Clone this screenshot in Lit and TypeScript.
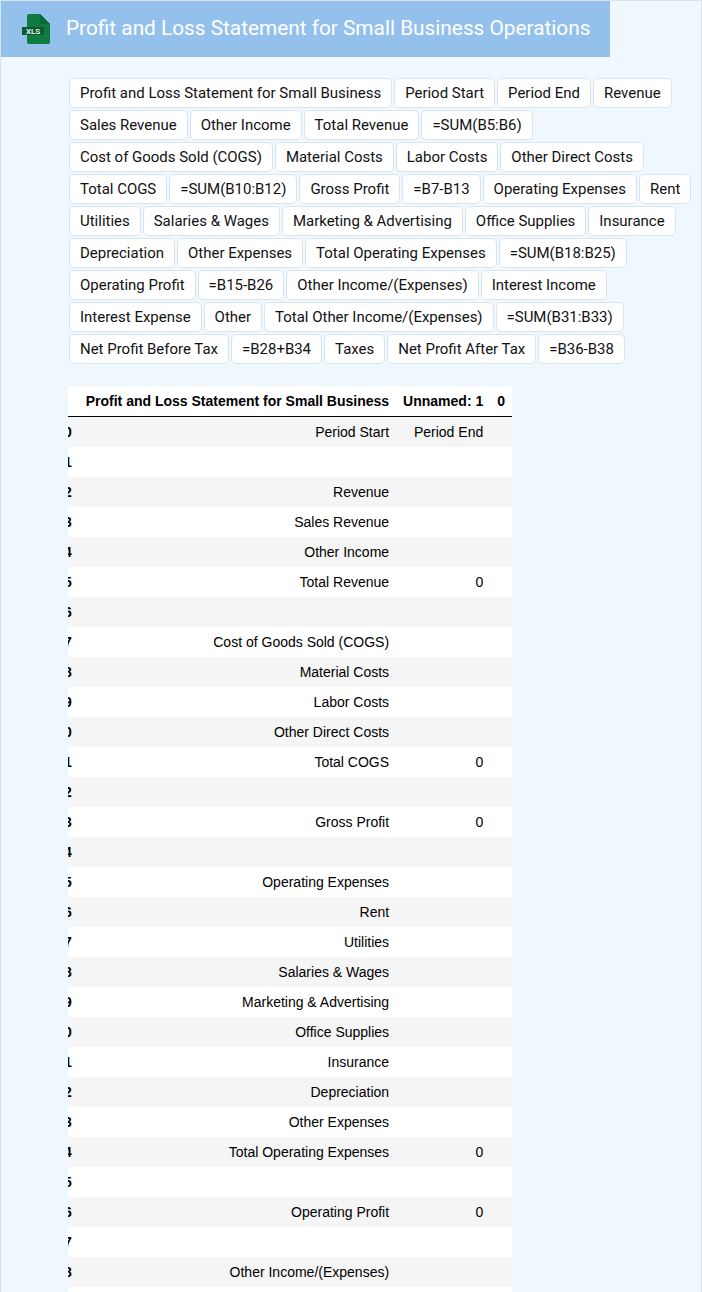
import { LitElement, html, css } from "lit";
import { customElement } from "lit/decorators.js";

const CHIPS = [
  "Profit and Loss Statement for Small Business", "Period Start", "Period End", "Revenue",
  "Sales Revenue", "Other Income", "Total Revenue", "=SUM(B5:B6)",
  "Cost of Goods Sold (COGS)", "Material Costs", "Labor Costs", "Other Direct Costs",
  "Total COGS", "=SUM(B10:B12)", "Gross Profit", "=B7-B13", "Operating Expenses", "Rent",
  "Utilities", "Salaries & Wages", "Marketing & Advertising", "Office Supplies", "Insurance",
  "Depreciation", "Other Expenses", "Total Operating Expenses", "=SUM(B18:B25)",
  "Operating Profit", "=B15-B26", "Other Income/(Expenses)", "Interest Income",
  "Interest Expense", "Other", "Total Other Income/(Expenses)", "=SUM(B31:B33)",
  "Net Profit Before Tax", "=B28+B34", "Taxes", "Net Profit After Tax", "=B36-B38",
];

const ROWS: [string, string][] = [
  ["Period Start", "Period End"], ["", ""], ["Revenue", ""], ["Sales Revenue", ""], ["Other Income", ""],
  ["Total Revenue", "0"], ["", ""], ["Cost of Goods Sold (COGS)", ""], ["Material Costs", ""], ["Labor Costs", ""],
  ["Other Direct Costs", ""], ["Total COGS", "0"], ["", ""], ["Gross Profit", "0"], ["", ""],
  ["Operating Expenses", ""], ["Rent", ""], ["Utilities", ""], ["Salaries & Wages", ""], ["Marketing & Advertising", ""],
  ["Office Supplies", ""], ["Insurance", ""], ["Depreciation", ""], ["Other Expenses", ""], ["Total Operating Expenses", "0"],
  ["", ""], ["Operating Profit", "0"], ["", ""], ["Other Income/(Expenses)", ""], ["Interest Income", ""],
  ["Interest Expense", ""], ["Other", ""], ["Total Other Income/(Expenses)", "0"], ["", ""], ["Net Profit Before Tax", "0"],
  ["Taxes", ""], ["Net Profit After Tax", "0"],
];

@customElement("app-root")
export class AppRoot extends LitElement {
  static styles = css`
    :host {
      display: block;
      height: 1292px;
      box-sizing: border-box;
      overflow: hidden;
      background: #f0f8ff;
      border: 1px solid #d6e3f2;
      border-bottom: none;
      font-family: Roboto, sans-serif;
    }
    .banner {
      width: 609px;
      height: 56px;
      box-sizing: border-box;
      background: #93c1ec;
      display: flex;
      align-items: center;
      padding-left: 21px;
      gap: 16px;
      color: #fff;
      font-size: 20.8px;
    }
    .banner svg { width: 28px; height: 30px; flex: none; }
    .title { position: relative; top: -1px; }
    .chips {
      display: flex;
      flex-wrap: wrap;
      gap: 2px;
      padding: 21px 4px 0 68px;
    }
    .chip {
      height: 30px;
      box-sizing: border-box;
      padding: 0 10px;
      display: flex;
      align-items: center;
      background: #fff;
      border: 1px solid #d9e4f1;
      border-radius: 5px;
      font-size: 14.98px;
      color: #111;
      white-space: nowrap;
    }
    .frame {
      margin: 22px 0 0 67px;
      width: 445px;
      overflow: hidden;
    }
    table {
      margin-left: -18.9px;
      border-collapse: collapse;
      font-family: "Liberation Sans", Arial, sans-serif;
      font-size: 14px;
      color: #000;
      background: #fff;
    }
    th, td {
      padding: 7px;
      text-align: right;
      line-height: 16px;
      height: 16px;
      white-space: nowrap;
    }
    thead th { border-bottom: 1px solid #000; }
    tbody tr:nth-child(odd) { background: #f5f5f5; }
  `;

  render() {
    return html`
      <div class="banner">
        <svg viewBox="0 0 28 30" aria-hidden="true">
          <path d="M7 0H18L28 10V28a2 2 0 0 1-2 2H7a2 2 0 0 1-2-2V2A2 2 0 0 1 7 0Z" fill="#0f7b41" />
          <path d="M18 0L28 10H20a2 2 0 0 1-2-2Z" fill="#0c6a38" />
          <rect x="0" y="13" width="22" height="8" fill="#0a5c35" />
          <text x="4" y="20" font-family="Roboto, sans-serif" font-size="8" font-weight="500" fill="#fff">XLS</text>
        </svg>
        <span class="title">Profit and Loss Statement for Small Business Operations</span>
      </div>
      <div class="chips">${CHIPS.map((c) => html`<span class="chip">${c}</span>`)}</div>
      <div class="frame">
        <table>
          <thead>
            <tr><th></th><th>Profit and Loss Statement for Small Business</th><th>Unnamed: 1</th><th>0</th></tr>
          </thead>
          <tbody>
            ${ROWS.map((r, i) => html`<tr><th>${i}</th><td>${r[0]}</td><td>${r[1]}</td><td></td></tr>`)}
          </tbody>
        </table>
      </div>
    `;
  }
}
